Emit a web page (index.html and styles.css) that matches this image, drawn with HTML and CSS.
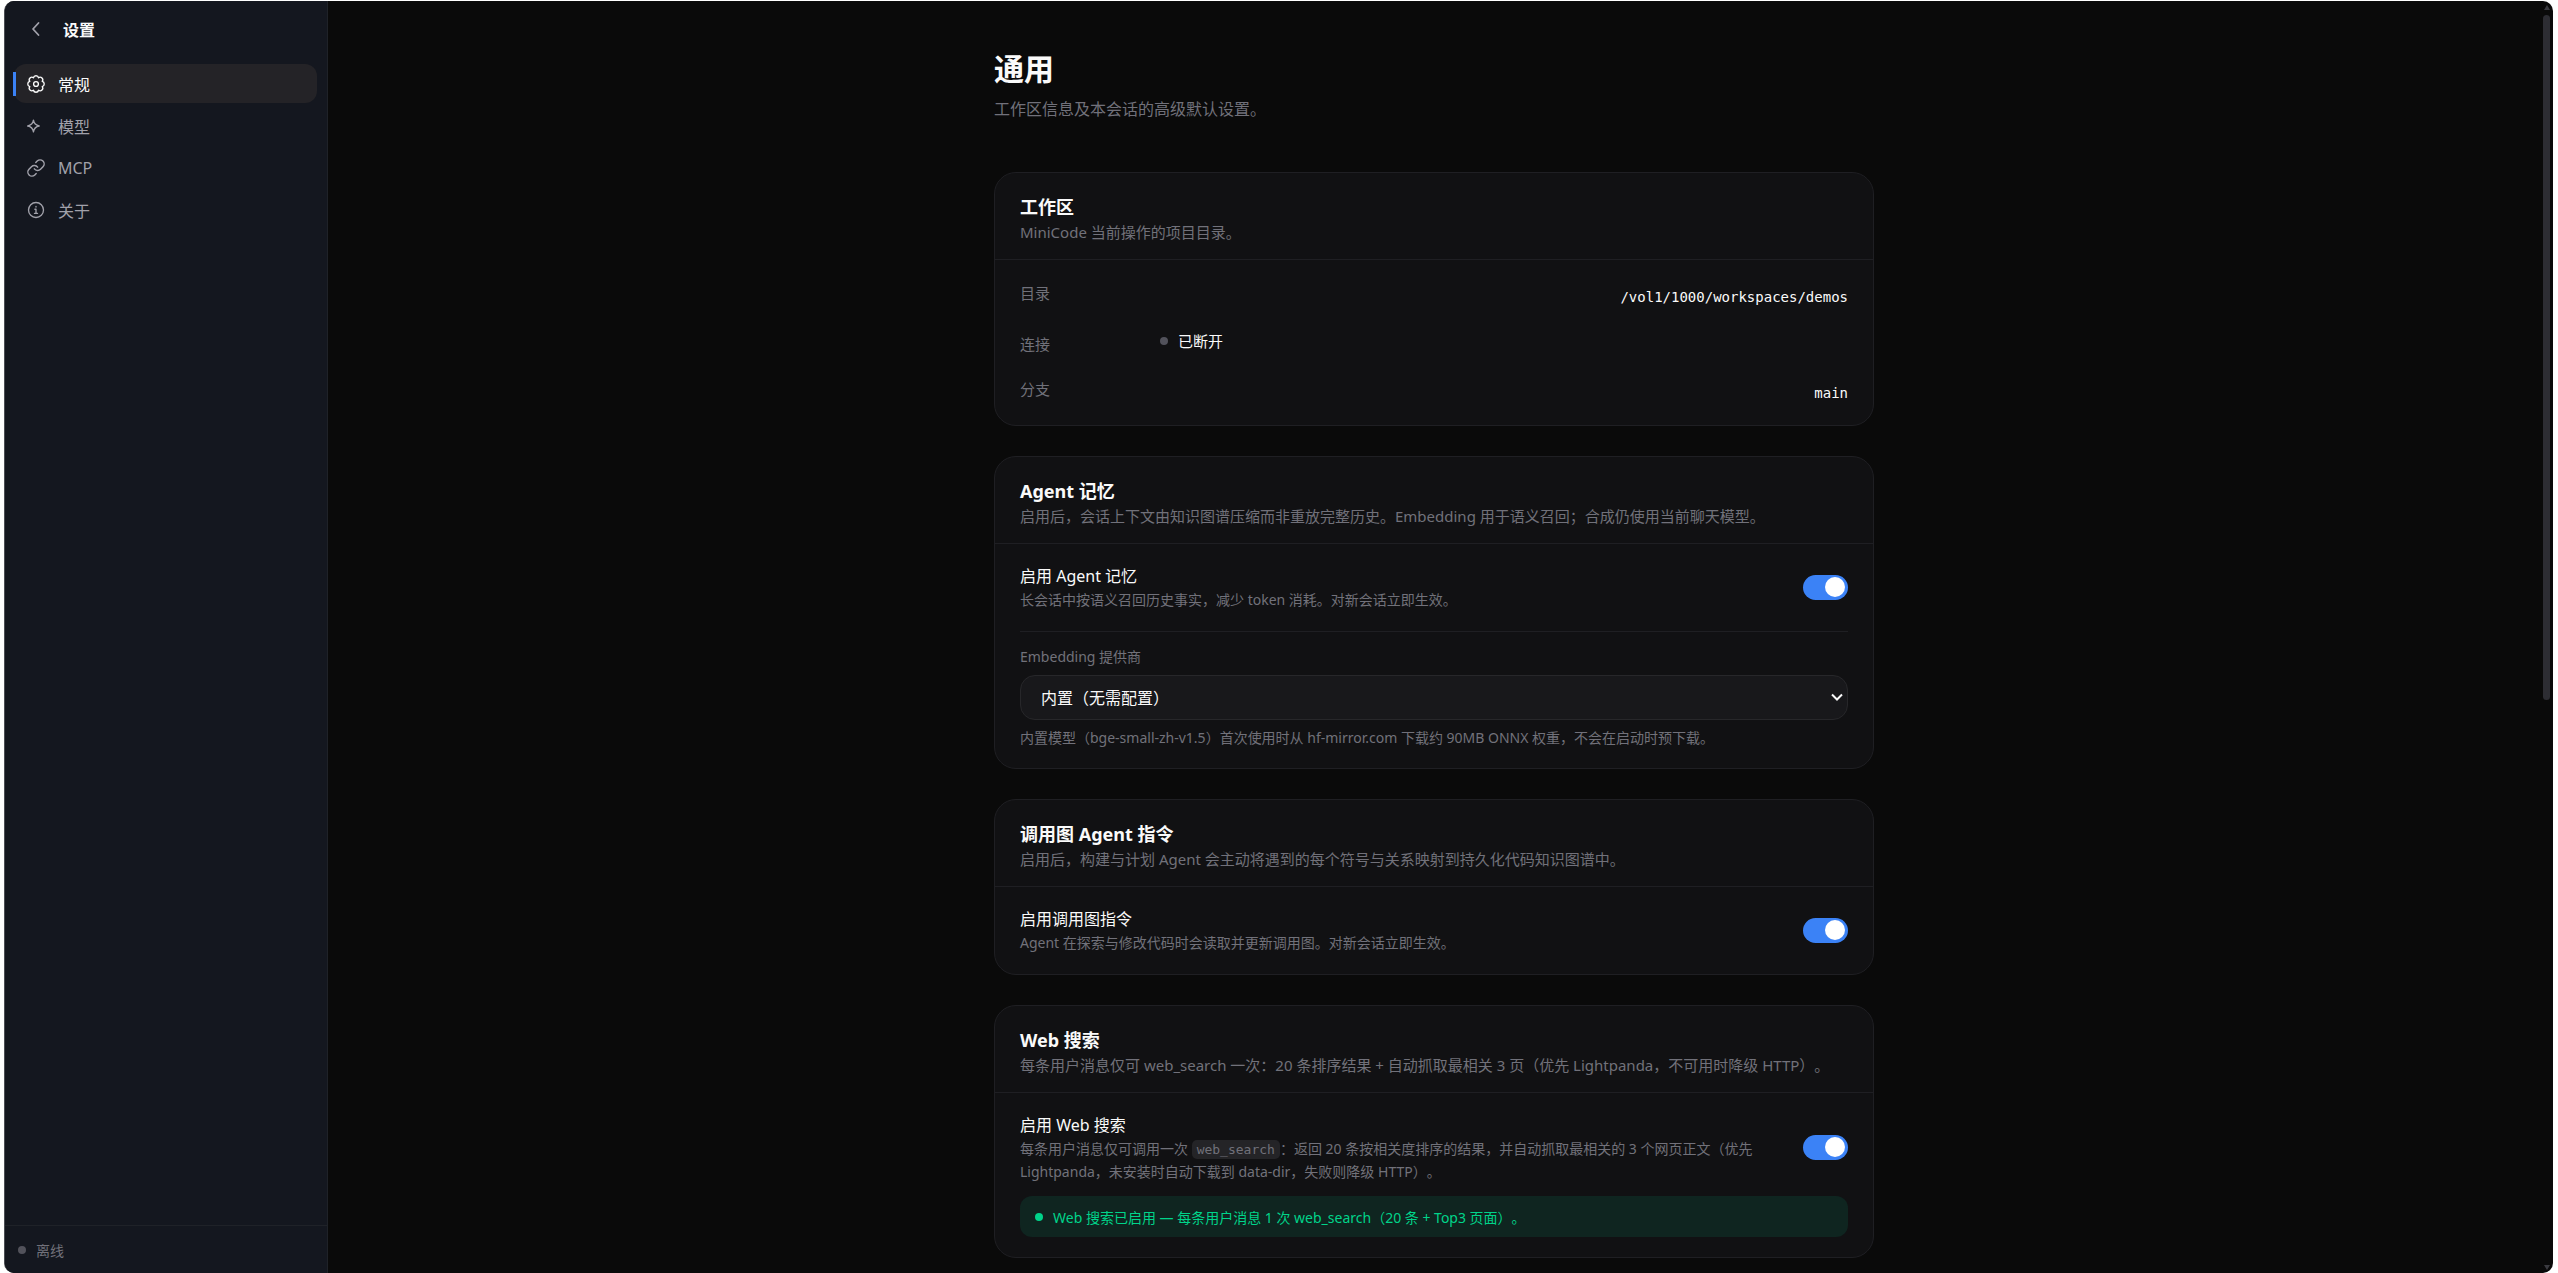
FILE: index.html
```html
<!DOCTYPE html>
<html lang="zh-CN">
<head>
    <meta charset="UTF-8">
    <meta name="viewport" content="width=device-width, initial-scale=1.0">
    <title>设置</title>
    <link rel="stylesheet" href="styles.css">
</head>
<body>
    <div class="window">
        <aside class="sidebar">
            <header class="sidebar-header">
                <button type="button" class="back" aria-label="返回">
                    <svg viewBox="0 0 18 18"><path d="M11.5 3 6 9l5.500 6"/></svg>
                </button>
                <span class="sidebar-title">设置</span>
            </header>
            <nav class="nav">
                <a href="#general" class="nav-item active">
                    <svg viewBox="0 0 24 24">
                        <path d="M20.300 15.400A3.500 3.500 0 0 1 15.400 20.300A3.500 3.500 0 0 1 8.600 20.300A3.500 3.500 0 0 1 3.700 15.400A3.500 3.500 0 0 1 3.700 8.600A3.500 3.500 0 0 1 8.600 3.700A3.500 3.500 0 0 1 15.400 3.700A3.500 3.500 0 0 1 20.300 8.600A3.500 3.500 0 0 1 20.300 15.400Z"/>
                        <circle cx="12" cy="12" r="3.200"/>
                    </svg>
                    常规
                </a>
                <a href="#models" class="nav-item">
                    <svg viewBox="0 0 24 24"><path d="M8.600 4.300Q9.700 10.900 16.300 12Q9.700 13.100 8.600 19.700Q7.500 13.100 .9 12Q7.500 10.900 8.600 4.300Z"/></svg>
                    模型
                </a>
                <a href="#mcp" class="nav-item">
                    <svg viewBox="1 1 22 22">
                        <path d="M10 13a5 5 0 0 0 7.540.540l3-3a5 5 0 0 0-7.070-7.070l-1.720 1.710"/>
                        <path d="M14 11a5 5 0 0 0-7.540-.540l-3 3a5 5 0 0 0 7.070 7.070l1.710-1.710"/>
                    </svg>
                    MCP
                </a>
                <a href="#about" class="nav-item">
                    <svg viewBox="0 0 24 24">
                        <circle cx="12" cy="12" r="10"/>
                        <path d="M10.500 11H12v5.500M10 16.500h4M12 7.300v.7"/>
                    </svg>
                    关于
                </a>
            </nav>
            <footer class="sidebar-footer"><span class="dot"></span>离线</footer>
        </aside>

        <main class="main">
            <div class="content" id="general">
                <h1>通用</h1>
                <p class="subtitle">工作区信息及本会话的高级默认设置。</p>

                <section class="card">
                    <header class="card-header">
                        <h2>工作区</h2>
                        <p>MiniCode 当前操作的项目目录。</p>
                    </header>
                    <dl class="info">
                        <div class="info-row">
                            <dt>目录</dt>
                            <dd class="mono">/vol1/1000/workspaces/demos</dd>
                        </div>
                        <div class="info-row status-row">
                            <dt>连接</dt>
                            <dd class="status"><span class="dot"></span>已断开</dd>
                        </div>
                        <div class="info-row">
                            <dt>分支</dt>
                            <dd class="mono">main</dd>
                        </div>
                    </dl>
                </section>

                <section class="card">
                    <header class="card-header">
                        <h2>Agent 记忆</h2>
                        <p>启用后，会话上下文由知识图谱压缩而非重放完整历史。Embedding 用于语义召回；合成仍使用当前聊天模型。</p>
                    </header>
                    <div class="card-body">
                        <div class="setting">
                            <div class="setting-text">
                                <label for="memory">启用 Agent 记忆</label>
                                <p>长会话中按语义召回历史事实，减少 token 消耗。对新会话立即生效。</p>
                            </div>
                            <input type="checkbox" class="switch" id="memory" checked>
                        </div>
                        <div class="field">
                            <label for="provider">Embedding 提供商</label>
                            <div class="select">
                                <select id="provider">
                                    <option>内置（无需配置）</option>
                                </select>
                                <svg viewBox="0 0 12 8"><path d="m1 1.500 5 5 5-5"/></svg>
                            </div>
                            <p>内置模型（bge-small-zh-v1.5）首次使用时从 hf-mirror.com 下载约 90MB ONNX 权重，不会在启动时预下载。</p>
                        </div>
                    </div>
                </section>

                <section class="card">
                    <header class="card-header">
                        <h2>调用图 Agent 指令</h2>
                        <p>启用后，构建与计划 Agent 会主动将遇到的每个符号与关系映射到持久化代码知识图谱中。</p>
                    </header>
                    <div class="card-body">
                        <div class="setting">
                            <div class="setting-text">
                                <label for="callgraph">启用调用图指令</label>
                                <p>Agent 在探索与修改代码时会读取并更新调用图。对新会话立即生效。</p>
                            </div>
                            <input type="checkbox" class="switch" id="callgraph" checked>
                        </div>
                    </div>
                </section>

                <section class="card">
                    <header class="card-header">
                        <h2>Web 搜索</h2>
                        <p>每条用户消息仅可 web_search 一次：20 条排序结果 + 自动抓取最相关 3 页（优先 Lightpanda，不可用时降级 HTTP）。</p>
                    </header>
                    <div class="card-body">
                        <div class="setting">
                            <div class="setting-text">
                                <label for="websearch">启用 Web 搜索</label>
                                <p>每条用户消息仅可调用一次 <code>web_search</code>：返回 20 条按相关度排序的结果，并自动抓取最相关的 3 个网页正文（优先 Lightpanda，未安装时自动下载到 data-dir，失败则降级 HTTP）。</p>
                            </div>
                            <input type="checkbox" class="switch" id="websearch" checked>
                        </div>
                        <div class="notice"><span class="dot"></span>Web 搜索已启用 — 每条用户消息 1 次 web_search（20 条 + Top3 页面）。</div>
                    </div>
                </section>
            </div>
        </main>

        <div class="scrollbar" aria-hidden="true">
            <svg viewBox="0 0 6 5"><path d="M3 0 6 5H0Z"/></svg>
            <div class="track"><div class="thumb"></div></div>
            <svg viewBox="0 0 6 5"><path d="M0 0h6L3 5Z"/></svg>
        </div>
    </div>
</body>
</html>
```
FILE: styles.css
```css
* {
    box-sizing: border-box;
}
body {
    margin: 0;
    height: 100vh;
    padding: 1px 5px 0 4px;
    overflow: hidden;
    background: #fff;
    color: #fafafa;
    color-scheme: dark;
    font-family: "Noto Sans", "Noto Sans CJK SC", sans-serif;
    font-size: 16px;
    text-spacing-trim: space-all;
}
h1, h2, p, dl, dd {
    margin: 0;
}
.window {
    display: flex;
    height: 100%;
    overflow: hidden;
    border-left: 1px solid #4b4e54;
    border-radius: 10px;
    background: #0a0a0a;
}
.dot {
    flex: none;
    width: 8px;
    height: 8px;
    border-radius: 50%;
    background: #52525b;
}

/* sidebar */
.sidebar {
    display: flex;
    flex-direction: column;
    flex: none;
    width: 323px;
    border-right: 1px solid #1f2228;
    background: #14171f;
}
.sidebar svg {
    flex: none;
    width: 18px;
    height: 18px;
    fill: none;
    stroke: currentColor;
    stroke-width: 1.8;
    stroke-linecap: round;
    stroke-linejoin: round;
}
.sidebar-header {
    display: flex;
    align-items: center;
    gap: 18px;
    height: 56px;
    padding-left: 22px;
}
.back {
    display: flex;
    padding: 0;
    border: none;
    background: none;
    color: #a1a1aa;
    cursor: pointer;
}
.sidebar-title {
    font-weight: 700;
}
.nav {
    display: flex;
    flex-direction: column;
    flex: 1;
    gap: 3px;
    padding: 7px 10px 0 9px;
}
.nav-item {
    position: relative;
    display: flex;
    align-items: center;
    gap: 13px;
    height: 39px;
    padding-left: 13px;
    border-radius: 12px;
    color: #a1a1aa;
    text-decoration: none;
}
.nav-item.active {
    background: #242327;
    color: #fafafa;
}
.nav-item.active::before {
    content: "";
    position: absolute;
    left: -1px;
    top: 8px;
    width: 3px;
    height: 24px;
    background: #3b82f6;
}
.sidebar-footer {
    display: flex;
    align-items: center;
    gap: 10px;
    height: 48px;
    padding-left: 13px;
    border-top: 1px solid #1f2228;
    color: #71717a;
    font-size: 14px;
}

/* content */
.main {
    flex: 1;
    min-width: 0;
    overflow: hidden;
}
.content {
    max-width: 880px;
    margin: 0 auto;
    padding-top: 48px;
}
h1 {
    font-size: 30px;
    line-height: 40px;
}
.subtitle {
    margin: 7px 0 50px;
    color: #71717a;
    line-height: 26px;
}
.card {
    margin-bottom: 30px;
    border: 1px solid #1f1f23;
    border-radius: 22px;
    background: #111113;
}
.card-header {
    padding: 21px 25px 15px;
    border-bottom: 1px solid #1f1f23;
}
.card-header h2 {
    font-size: 18px;
    line-height: 26px;
}
.card-header p {
    color: #71717a;
    font-size: 15px;
    line-height: 24px;
}
.card-body {
    padding: 19px 25px 20px;
}

/* workspace details */
.info {
    padding: 22px 25px 15px;
    font-size: 15px;
    line-height: 22px;
}
.info-row {
    display: flex;
    height: 32px;
}
.info dt {
    width: 140px;
    color: #71717a;
}
.status-row {
    height: 28px;
    margin: 16px 0 20px;
}
.status-row dt {
    align-self: center;
}
.status {
    display: flex;
    align-items: center;
    align-self: flex-start;
    gap: 10px;
}
.mono {
    flex: 1;
    font-family: "DejaVu Sans Mono", monospace;
    font-size: 14px;
    line-height: 30px;
    text-align: right;
}

/* settings */
.setting {
    display: flex;
    align-items: center;
    gap: 20px;
}
.setting-text {
    flex: 1;
}
.setting label {
    display: block;
    line-height: 26px;
}
.setting p {
    color: #71717a;
    font-size: 14px;
    line-height: 22px;
}
.setting code {
    padding: 2px 5px;
    border-radius: 5px;
    background: #242427;
    font-family: "DejaVu Sans Mono", monospace;
    font-size: 13px;
}
.switch {
    appearance: none;
    display: flex;
    flex: none;
    justify-content: flex-end;
    width: 45px;
    height: 25px;
    margin: 0;
    padding: 2px 3px;
    border-radius: 13px;
    background: #3b82f6;
    cursor: pointer;
}
.switch::before {
    content: "";
    width: 20px;
    height: 20px;
    border-radius: 50%;
    background: #fff;
}
.switch:not(:checked) {
    justify-content: flex-start;
    background: #3f3f46;
}
.field {
    display: flex;
    flex-direction: column;
    gap: 7px;
    margin-top: 20px;
    padding-top: 14px;
    border-top: 1px solid #1f1f23;
    color: #71717a;
    font-size: 14px;
    line-height: 22px;
}
.field:last-child {
    margin-bottom: -1px;
}
.select {
    position: relative;
    display: flex;
}
.select select {
    appearance: none;
    width: 100%;
    height: 45px;
    padding: 0 20px;
    border: 1px solid #27272a;
    border-radius: 15px;
    background: #18181b;
    color: #fafafa;
    font-family: inherit;
    font-size: 16px;
}
.select svg {
    position: absolute;
    top: 18px;
    right: 5px;
    width: 12px;
    height: 8px;
    fill: none;
    stroke: #fafafa;
    stroke-width: 2;
    pointer-events: none;
}
.notice {
    display: flex;
    align-items: center;
    gap: 10px;
    height: 41px;
    margin-top: 13px;
    padding: 0 15px;
    border-radius: 12px;
    background: #0f2520;
    color: #00d48a;
    font-size: 14px;
}
.notice .dot {
    background: #00d48a;
}

/* scrollbar */
.scrollbar {
    display: flex;
    flex-direction: column;
    align-items: center;
    flex: none;
    width: 13px;
    padding: 4px 0 3px;
}
.scrollbar svg {
    width: 6px;
    height: 5px;
    fill: #3a3a40;
}
.track {
    flex: 1;
    padding: 5px 0;
}
.thumb {
    width: 7px;
    height: 55%;
    border-radius: 4px;
    background: #2d2d33;
}
```
